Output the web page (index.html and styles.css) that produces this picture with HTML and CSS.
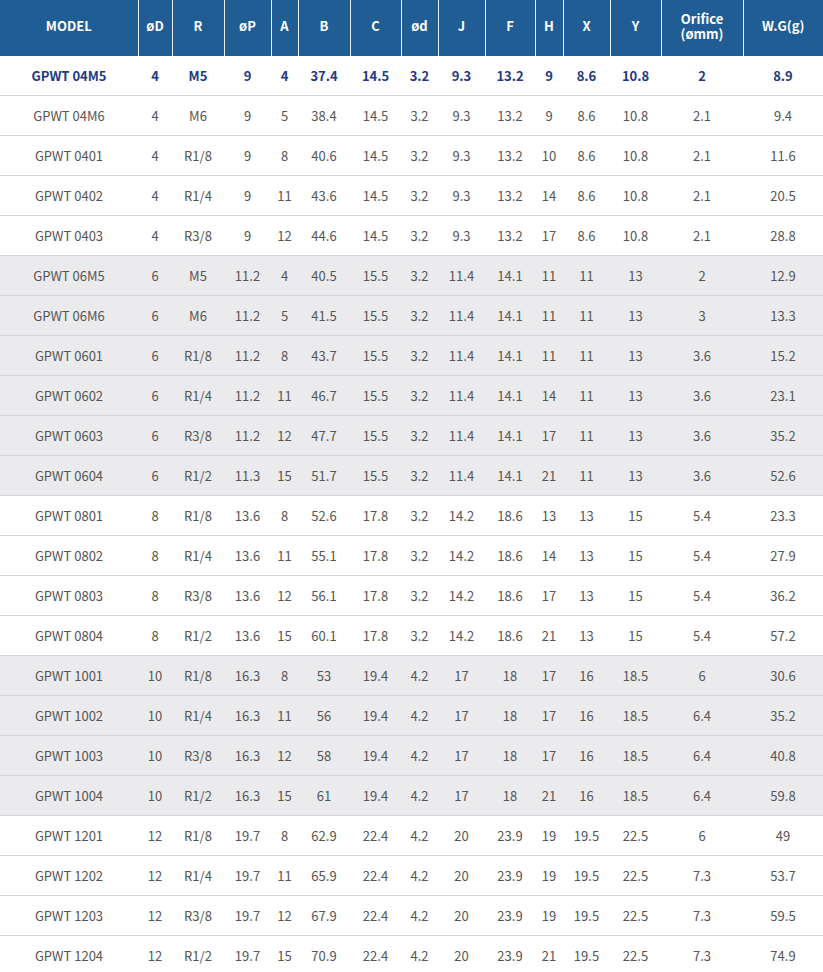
FILE: index.html
```html
<!DOCTYPE html>
<html>
<head>
<meta charset="utf-8">
<link rel="stylesheet" href="styles.css">
</head>
<body>
<table class="spec">
<colgroup>
<col class="c-model"><col class="c-d"><col class="c-r"><col class="c-p"><col class="c-a"><col class="c-b"><col class="c-c"><col class="c-sd"><col class="c-j"><col class="c-f"><col class="c-h"><col class="c-x"><col class="c-y"><col class="c-o"><col class="c-w">
</colgroup>
<thead>
<tr><th>MODEL</th><th>øD</th><th>R</th><th>øP</th><th>A</th><th>B</th><th>C</th><th>ød</th><th>J</th><th>F</th><th>H</th><th>X</th><th>Y</th><th>Orifice<br>(ømm)</th><th>W.G(g)</th></tr>
</thead>
<tbody>
<tr class="hl"><td>GPWT 04M5</td><td>4</td><td>M5</td><td>9</td><td>4</td><td>37.4</td><td>14.5</td><td>3.2</td><td>9.3</td><td>13.2</td><td>9</td><td>8.6</td><td>10.8</td><td>2</td><td>8.9</td></tr>
<tr><td>GPWT 04M6</td><td>4</td><td>M6</td><td>9</td><td>5</td><td>38.4</td><td>14.5</td><td>3.2</td><td>9.3</td><td>13.2</td><td>9</td><td>8.6</td><td>10.8</td><td>2.1</td><td>9.4</td></tr>
<tr><td>GPWT 0401</td><td>4</td><td>R1/8</td><td>9</td><td>8</td><td>40.6</td><td>14.5</td><td>3.2</td><td>9.3</td><td>13.2</td><td>10</td><td>8.6</td><td>10.8</td><td>2.1</td><td>11.6</td></tr>
<tr><td>GPWT 0402</td><td>4</td><td>R1/4</td><td>9</td><td>11</td><td>43.6</td><td>14.5</td><td>3.2</td><td>9.3</td><td>13.2</td><td>14</td><td>8.6</td><td>10.8</td><td>2.1</td><td>20.5</td></tr>
<tr><td>GPWT 0403</td><td>4</td><td>R3/8</td><td>9</td><td>12</td><td>44.6</td><td>14.5</td><td>3.2</td><td>9.3</td><td>13.2</td><td>17</td><td>8.6</td><td>10.8</td><td>2.1</td><td>28.8</td></tr>
<tr class="alt"><td>GPWT 06M5</td><td>6</td><td>M5</td><td>11.2</td><td>4</td><td>40.5</td><td>15.5</td><td>3.2</td><td>11.4</td><td>14.1</td><td>11</td><td>11</td><td>13</td><td>2</td><td>12.9</td></tr>
<tr class="alt"><td>GPWT 06M6</td><td>6</td><td>M6</td><td>11.2</td><td>5</td><td>41.5</td><td>15.5</td><td>3.2</td><td>11.4</td><td>14.1</td><td>11</td><td>11</td><td>13</td><td>3</td><td>13.3</td></tr>
<tr class="alt"><td>GPWT 0601</td><td>6</td><td>R1/8</td><td>11.2</td><td>8</td><td>43.7</td><td>15.5</td><td>3.2</td><td>11.4</td><td>14.1</td><td>11</td><td>11</td><td>13</td><td>3.6</td><td>15.2</td></tr>
<tr class="alt"><td>GPWT 0602</td><td>6</td><td>R1/4</td><td>11.2</td><td>11</td><td>46.7</td><td>15.5</td><td>3.2</td><td>11.4</td><td>14.1</td><td>14</td><td>11</td><td>13</td><td>3.6</td><td>23.1</td></tr>
<tr class="alt"><td>GPWT 0603</td><td>6</td><td>R3/8</td><td>11.2</td><td>12</td><td>47.7</td><td>15.5</td><td>3.2</td><td>11.4</td><td>14.1</td><td>17</td><td>11</td><td>13</td><td>3.6</td><td>35.2</td></tr>
<tr class="alt"><td>GPWT 0604</td><td>6</td><td>R1/2</td><td>11.3</td><td>15</td><td>51.7</td><td>15.5</td><td>3.2</td><td>11.4</td><td>14.1</td><td>21</td><td>11</td><td>13</td><td>3.6</td><td>52.6</td></tr>
<tr><td>GPWT 0801</td><td>8</td><td>R1/8</td><td>13.6</td><td>8</td><td>52.6</td><td>17.8</td><td>3.2</td><td>14.2</td><td>18.6</td><td>13</td><td>13</td><td>15</td><td>5.4</td><td>23.3</td></tr>
<tr><td>GPWT 0802</td><td>8</td><td>R1/4</td><td>13.6</td><td>11</td><td>55.1</td><td>17.8</td><td>3.2</td><td>14.2</td><td>18.6</td><td>14</td><td>13</td><td>15</td><td>5.4</td><td>27.9</td></tr>
<tr><td>GPWT 0803</td><td>8</td><td>R3/8</td><td>13.6</td><td>12</td><td>56.1</td><td>17.8</td><td>3.2</td><td>14.2</td><td>18.6</td><td>17</td><td>13</td><td>15</td><td>5.4</td><td>36.2</td></tr>
<tr><td>GPWT 0804</td><td>8</td><td>R1/2</td><td>13.6</td><td>15</td><td>60.1</td><td>17.8</td><td>3.2</td><td>14.2</td><td>18.6</td><td>21</td><td>13</td><td>15</td><td>5.4</td><td>57.2</td></tr>
<tr class="alt"><td>GPWT 1001</td><td>10</td><td>R1/8</td><td>16.3</td><td>8</td><td>53</td><td>19.4</td><td>4.2</td><td>17</td><td>18</td><td>17</td><td>16</td><td>18.5</td><td>6</td><td>30.6</td></tr>
<tr class="alt"><td>GPWT 1002</td><td>10</td><td>R1/4</td><td>16.3</td><td>11</td><td>56</td><td>19.4</td><td>4.2</td><td>17</td><td>18</td><td>17</td><td>16</td><td>18.5</td><td>6.4</td><td>35.2</td></tr>
<tr class="alt"><td>GPWT 1003</td><td>10</td><td>R3/8</td><td>16.3</td><td>12</td><td>58</td><td>19.4</td><td>4.2</td><td>17</td><td>18</td><td>17</td><td>16</td><td>18.5</td><td>6.4</td><td>40.8</td></tr>
<tr class="alt"><td>GPWT 1004</td><td>10</td><td>R1/2</td><td>16.3</td><td>15</td><td>61</td><td>19.4</td><td>4.2</td><td>17</td><td>18</td><td>21</td><td>16</td><td>18.5</td><td>6.4</td><td>59.8</td></tr>
<tr><td>GPWT 1201</td><td>12</td><td>R1/8</td><td>19.7</td><td>8</td><td>62.9</td><td>22.4</td><td>4.2</td><td>20</td><td>23.9</td><td>19</td><td>19.5</td><td>22.5</td><td>6</td><td>49</td></tr>
<tr><td>GPWT 1202</td><td>12</td><td>R1/4</td><td>19.7</td><td>11</td><td>65.9</td><td>22.4</td><td>4.2</td><td>20</td><td>23.9</td><td>19</td><td>19.5</td><td>22.5</td><td>7.3</td><td>53.7</td></tr>
<tr><td>GPWT 1203</td><td>12</td><td>R3/8</td><td>19.7</td><td>12</td><td>67.9</td><td>22.4</td><td>4.2</td><td>20</td><td>23.9</td><td>19</td><td>19.5</td><td>22.5</td><td>7.3</td><td>59.5</td></tr>
<tr><td>GPWT 1204</td><td>12</td><td>R1/2</td><td>19.7</td><td>15</td><td>70.9</td><td>22.4</td><td>4.2</td><td>20</td><td>23.9</td><td>21</td><td>19.5</td><td>22.5</td><td>7.3</td><td>74.9</td></tr>
</tbody>
</table>
</body>
</html>
```
FILE: styles.css
```css
html, body {
  margin: 0;
  padding: 0;
  background: #ffffff;
}
body {
  font-family: "Noto Sans CJK KR", "Noto Sans", sans-serif;
  font-size: 13px;
  color: #555555;
}
.spec {
  width: 823px;
  border-collapse: collapse;
  table-layout: fixed;
}
.c-model { width: 138px; }
.c-d { width: 34px; }
.c-r { width: 52px; }
.c-p { width: 47px; }
.c-a { width: 27px; }
.c-b { width: 52px; }
.c-c { width: 51px; }
.c-sd { width: 37px; }
.c-j { width: 47px; }
.c-f { width: 50px; }
.c-h { width: 28px; }
.c-x { width: 47px; }
.c-y { width: 51px; }
.c-o { width: 82px; }
.c-w { width: 80px; }
.spec th {
  height: 51px;
  padding: 0 0 5px 0;
  background: #1f5d94;
  color: #ffffff;
  font-weight: 700;
  font-size: 13px;
  line-height: 15px;
  text-align: center;
  border-left: 1px solid #e6edf4;
}
.spec th:first-child {
  border-left: none;
}
.spec td {
  height: 39px;
  padding: 0;
  text-align: center;
  border-bottom: 1px solid #d5d5d5;
  line-height: 16px;
}
.spec tr.hl td {
  color: #22397f;
  font-weight: 700;
}
.spec tr.alt td {
  background: #ebebed;
}
```
